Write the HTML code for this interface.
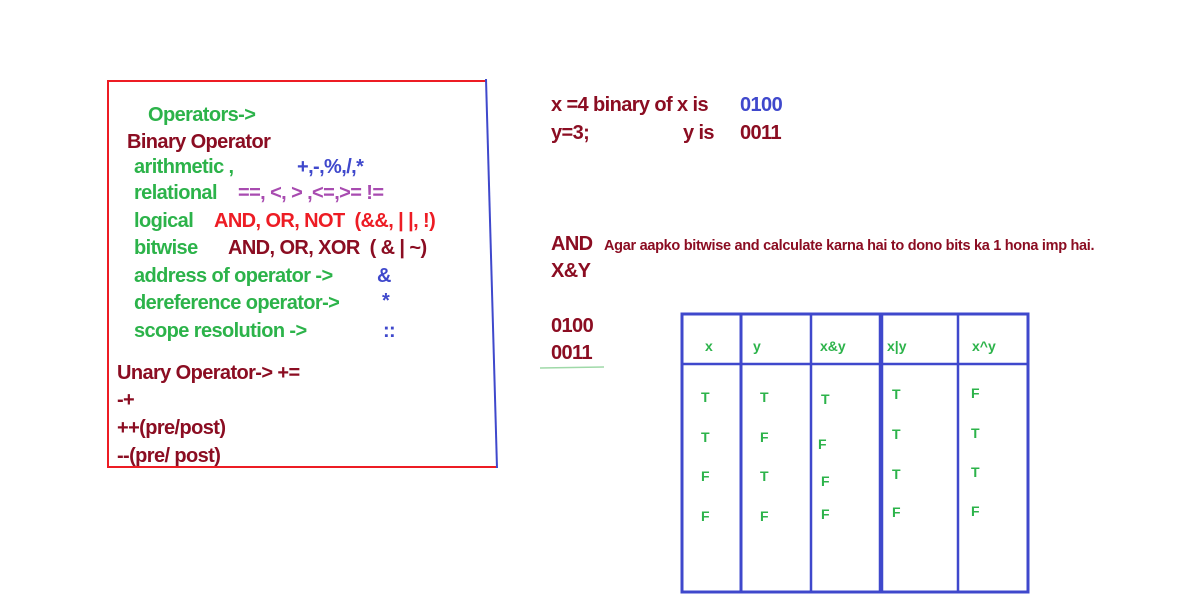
<html><head><style>
body{margin:0;width:1197px;height:612px;background:#fff;position:relative;overflow:hidden;font-family:"Liberation Sans",sans-serif;font-weight:bold;font-size:20px}
.t{position:absolute;white-space:pre;line-height:22px;letter-spacing:-0.6px}
.g{color:#2cb34a}.r{color:#8b0d22}.b{color:#3f48cc}.p{color:#a84bb0}.rd{color:#ed1c24}
.s{font-size:14.5px;letter-spacing:-0.3px}
.s2{font-size:14px;letter-spacing:0}
</style></head><body>
<svg width="1197" height="612" style="position:absolute;left:0;top:0">
<polyline points="486,81 108,81 108,467 497,467" fill="none" stroke="#ed1c24" stroke-width="2"/>
<line x1="486" y1="79" x2="497" y2="468" stroke="#3f48cc" stroke-width="2"/>
<g stroke="#3f48cc" fill="none">
<rect x="682" y="314" width="346" height="278" stroke-width="3"/>
<line x1="682" y1="364" x2="1028" y2="364" stroke-width="2.5"/>
<line x1="741" y1="314" x2="741" y2="592" stroke-width="3"/>
<line x1="811" y1="314" x2="811" y2="592" stroke-width="2.5"/>
<line x1="881" y1="315" x2="881" y2="592" stroke-width="4.5"/>
<line x1="958" y1="314" x2="958" y2="592" stroke-width="2.5"/>
</g>
<line x1="540" y1="368" x2="604" y2="367" stroke="#9fd9a8" stroke-width="1.5"/>
</svg>
<div class="t g" style="left:148px;top:104px">Operators-&gt;</div>
<div class="t r" style="left:127px;top:131px">Binary Operator</div>
<div class="t g" style="left:134px;top:156px">arithmetic ,</div><div class="t b" style="left:297px;top:156px">+,-,%,/,*</div>
<div class="t g" style="left:134px;top:182px">relational</div><div class="t p" style="left:238px;top:182px">==, &lt;, &gt; ,&lt;=,&gt;= !=</div>
<div class="t g" style="left:134px;top:210px">logical</div><div class="t rd" style="left:214px;top:210px">AND, OR, NOT  (&amp;&amp;, | |, !)</div>
<div class="t g" style="left:134px;top:237px">bitwise</div><div class="t r" style="left:228px;top:237px">AND, OR, XOR  ( &amp; | ~)</div>
<div class="t g" style="left:134px;top:265px">address of operator -&gt;</div><div class="t b" style="left:377px;top:265px">&amp;</div>
<div class="t g" style="left:134px;top:292px">dereference operator-&gt;</div><div class="t b" style="left:382px;top:290px">*</div>
<div class="t g" style="left:134px;top:320px">scope resolution -&gt;</div><div class="t b" style="left:383px;top:320px">::</div>
<div class="t r" style="left:117px;top:362px">Unary Operator-&gt; +=</div>
<div class="t r" style="left:117px;top:389px">-+</div>
<div class="t r" style="left:117px;top:417px">++(pre/post)</div>
<div class="t r" style="left:117px;top:445px">--(pre/ post)</div>
<div class="t r" style="left:551px;top:94px">x =4 binary of x is</div><div class="t b" style="left:740px;top:94px">0100</div>
<div class="t r" style="left:551px;top:122px">y=3;</div><div class="t r" style="left:683px;top:122px">y is</div><div class="t r" style="left:740px;top:122px">0011</div>
<div class="t r" style="left:551px;top:233px">AND</div><div class="t r s" style="left:604px;top:235px">Agar aapko bitwise and calculate karna hai to dono bits ka 1 hona imp hai.</div>
<div class="t r" style="left:551px;top:260px">X&amp;Y</div>
<div class="t r" style="left:551px;top:315px">0100</div>
<div class="t r" style="left:551px;top:342px">0011</div>
<div class="t g s2" style="left:705px;top:335px">x</div>
<div class="t g s2" style="left:753px;top:335px">y</div>
<div class="t g s2" style="left:820px;top:335px">x&amp;y</div>
<div class="t g s2" style="left:887px;top:335px">x|y</div>
<div class="t g s2" style="left:972px;top:335px">x^y</div>
<div class="t g s2" style="left:701px;top:386px">T</div><div class="t g s2" style="left:760px;top:386px">T</div><div class="t g s2" style="left:821px;top:388px">T</div><div class="t g s2" style="left:892px;top:383px">T</div><div class="t g s2" style="left:971px;top:382px">F</div>
<div class="t g s2" style="left:701px;top:426px">T</div><div class="t g s2" style="left:760px;top:426px">F</div><div class="t g s2" style="left:818px;top:433px">F</div><div class="t g s2" style="left:892px;top:423px">T</div><div class="t g s2" style="left:971px;top:422px">T</div>
<div class="t g s2" style="left:701px;top:465px">F</div><div class="t g s2" style="left:760px;top:465px">T</div><div class="t g s2" style="left:821px;top:470px">F</div><div class="t g s2" style="left:892px;top:463px">T</div><div class="t g s2" style="left:971px;top:461px">T</div>
<div class="t g s2" style="left:701px;top:505px">F</div><div class="t g s2" style="left:760px;top:505px">F</div><div class="t g s2" style="left:821px;top:503px">F</div><div class="t g s2" style="left:892px;top:501px">F</div><div class="t g s2" style="left:971px;top:500px">F</div>
</body></html>
